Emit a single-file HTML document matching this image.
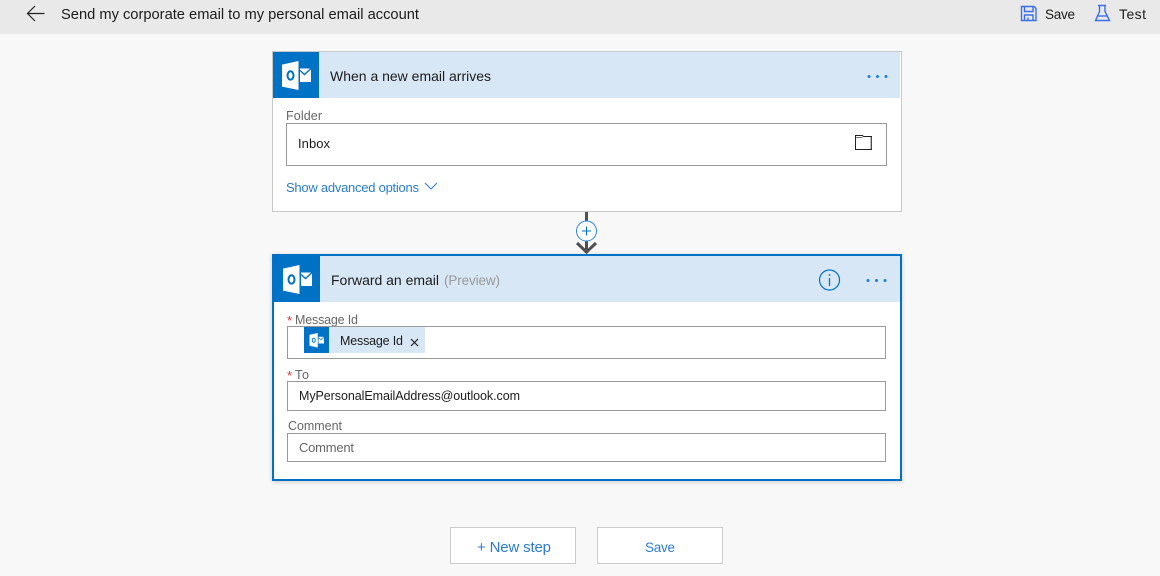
<!DOCTYPE html>
<html lang="en">
<head>
<meta charset="utf-8">
<title>Send my corporate email to my personal email account</title>
<style>
html,body{margin:0;padding:0;width:1160px;height:576px;overflow:hidden;background:#f8f8f8}
svg{display:block}
text{font-family:"Liberation Sans",sans-serif;font-size:14px;fill:#1c1c1c}
.blue{fill:#2b7cd3}
.gray{fill:#666}
.s{font-size:12.5px}
</style>
</head>
<body>
<svg width="1160" height="576" viewBox="0 0 1160 576" xmlns="http://www.w3.org/2000/svg">
<defs>
<filter id="sh" x="-5%" y="-5%" width="110%" height="110%"><feDropShadow dx="0" dy="1" stdDeviation="2" flood-color="#000" flood-opacity=".18"/></filter>
<g id="ol">
<path d="M0 3.600 16.500 0V29L0 25.600Z" fill="#fff"/>
<path d="M18 7.500H29V21H18Z" fill="#fff"/>
<path d="M18 9.500 22.500 13.500 29 7.500" fill="none" stroke="#0072c6" stroke-width="1.400"/>
<ellipse cx="8.500" cy="14.500" rx="3" ry="4.200" fill="none" stroke="#0072c6" stroke-width="2"/>
</g>
</defs>

<!-- top bar -->
<rect x="0" y="0" width="1160" height="34" fill="#e9e9e9"/>
<path d="M44.500 13.500H27.500M35 6 27.500 13.500 35 21" fill="none" stroke="#222" stroke-width="1.200"/>
<text x="61" y="19" textLength="358" lengthAdjust="spacing" style="font-size:14.700px">Send my corporate email to my personal email account</text>

<g fill="none" stroke="#3b6fe8" stroke-width="1.400">
<path d="M1021.500 6.500H1034L1036 8.500V20.500H1021.500Z"/>
<path d="M1024.500 6.500V11.500H1033V6.500"/>
<path d="M1024.500 20.500V15H1033V20.500"/>
<path d="M1028 20.500V17.500"/>
</g>
<text x="1045" y="19" textLength="30" lengthAdjust="spacing" style="font-size:13.500px">Save</text>
<g fill="none" stroke="#3b6fe8" stroke-width="1.400">
<path d="M1098 5.500H1106M1099.500 5.500V11.500L1095.500 20.500H1109.500L1105 11.500V5.500"/>
<path d="M1097.500 16H1107.500"/>
</g>
<text x="1119" y="19" textLength="27" lengthAdjust="spacing">Test</text>

<!-- card 1 -->
<rect x="272.500" y="51.500" width="629" height="160" fill="#fff" stroke="#c8c8c8"/>
<rect x="273" y="52" width="627" height="46" fill="#d8e7f5"/>
<rect x="273" y="52" width="46" height="46" fill="#0072c6"/>
<use href="#ol" x="282" y="61"/>
<text x="330" y="81" textLength="161" lengthAdjust="spacing">When a new email arrives</text>
<g fill="#1a7fe0"><circle cx="869" cy="76.500" r="1.500"/><circle cx="877.500" cy="76.500" r="1.500"/><circle cx="886" cy="76.500" r="1.500"/></g>

<text x="286" y="120" textLength="36" lengthAdjust="spacing" class="gray s">Folder</text>
<rect x="286.500" y="123.500" width="600" height="42" fill="#fff" stroke="#999"/>
<text x="298" y="148" textLength="32" lengthAdjust="spacing" style="font-size:13px">Inbox</text>
<path d="M855.500 135.500H862.500L863.500 136.500H871.500V149.500H855.500Z" fill="none" stroke="#222" stroke-width="1"/>
<path d="M856 137.500H862.500" stroke="#777" stroke-width="1"/>
<path d="M871 137V149" stroke="#777" stroke-width="1"/>
<text x="286" y="192" textLength="133" lengthAdjust="spacing" class="blue" style="font-size:13px">Show advanced options</text>
<path d="M425 183 431 189 437 183" fill="none" stroke="#2b7cd3" stroke-width="1"/>

<!-- connector -->
<rect x="585" y="212" width="3" height="11" fill="#505050"/>
<rect x="585" y="240" width="3" height="13" fill="#505050"/>
<path d="M577 243 586.500 252 596 243" fill="none" stroke="#505050" stroke-width="3"/>
<circle cx="586.500" cy="231" r="10" fill="#fff" stroke="#2b88d8" stroke-width="1"/>
<path d="M582 231H591M586.500 226.500V235.500" stroke="#0072c6" stroke-width="1" fill="none"/>

<!-- card 2 -->
<rect x="273" y="255" width="628" height="225" fill="#fff" stroke="#0072c6" stroke-width="2" filter="url(#sh)"/>
<rect x="274" y="256" width="626" height="46" fill="#d8e7f5"/>
<rect x="272" y="254" width="48" height="48" fill="#0072c6"/>
<use href="#ol" x="283" y="265"/>
<text x="331" y="285" textLength="108" lengthAdjust="spacing">Forward an email</text>
<text x="444" y="285" textLength="56" lengthAdjust="spacing" style="fill:#999;font-size:13.500px">(Preview)</text>
<circle cx="829.500" cy="280" r="10" fill="none" stroke="#0072c6" stroke-width="1.200"/>
<path d="M829.500 278V286" stroke="#0072c6" stroke-width="1.300"/>
<circle cx="829.500" cy="275" r=".9" fill="#0072c6"/>
<g fill="#1a7fe0"><circle cx="868" cy="280.500" r="1.500"/><circle cx="876.500" cy="280.500" r="1.500"/><circle cx="885" cy="280.500" r="1.500"/></g>

<text x="287" y="325" style="font-size:13px;fill:#d13438">*</text>
<text x="295" y="324" textLength="63" lengthAdjust="spacing" class="gray s">Message Id</text>
<rect x="287.500" y="326.500" width="598" height="32" fill="#fff" stroke="#999"/>
<rect x="304" y="327" width="121" height="26" fill="#d8e7f5"/>
<rect x="304" y="327" width="25" height="26" fill="#0072c6"/>
<g transform="translate(309.500 333) scale(.5)"><use href="#ol"/></g>
<text x="340" y="345" textLength="63" lengthAdjust="spacing" class="s">Message Id</text>
<path d="M411 339 418 346M418 339 411 346" stroke="#222" stroke-width="1.200" fill="none"/>

<text x="287" y="380" style="font-size:13px;fill:#d13438">*</text>
<text x="295" y="379" textLength="14" lengthAdjust="spacing" class="gray s">To</text>
<rect x="287.500" y="381.500" width="598" height="29" fill="#fff" stroke="#999"/>
<text x="299" y="400" textLength="221" lengthAdjust="spacing" class="s">MyPersonalEmailAddress@outlook.com</text>

<text x="288" y="430" textLength="54" lengthAdjust="spacing" class="gray s">Comment</text>
<rect x="287.500" y="433.500" width="598" height="28" fill="#fff" stroke="#999"/>
<text x="299" y="452" textLength="55" lengthAdjust="spacing" class="gray" style="font-size:13px">Comment</text>

<!-- buttons -->
<rect x="450.500" y="527.500" width="125" height="36" fill="#fff" stroke="#ccc"/>
<text x="477" y="552" textLength="74" lengthAdjust="spacing" class="blue" style="font-size:15px">+ New step</text>
<rect x="597.500" y="527.500" width="125" height="36" fill="#fff" stroke="#ccc"/>
<text x="645" y="552" textLength="30" lengthAdjust="spacing" class="blue" style="font-size:13.500px">Save</text>
</svg>
</body>
</html>
